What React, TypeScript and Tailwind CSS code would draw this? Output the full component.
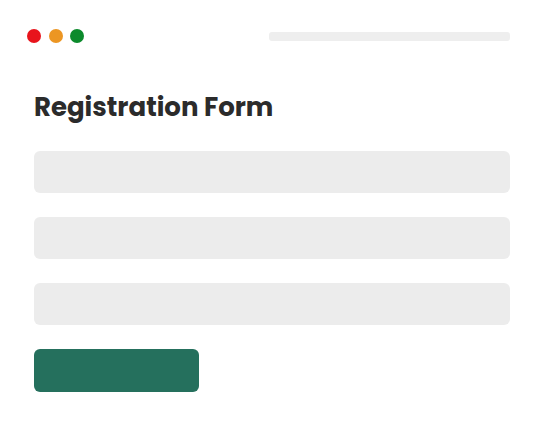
import React from "react";

export default function App() {
  return (
    <div className="w-[539px] h-[448px] bg-white" style={{ fontFamily: "Poppins, Inter, 'Noto Sans', sans-serif" }}>
      <div className="flex items-center justify-between pl-[27px] pr-[29px] pt-[29px]">
        <div className="flex items-center gap-[7.5px]">
          <span className="block w-[14px] h-[14px] rounded-full bg-[#e8141c]" />
          <span className="block w-[14px] h-[14px] rounded-full bg-[#ec9623]" />
          <span className="block w-[14px] h-[14px] rounded-full bg-[#0c8a2c]" />
        </div>
        <div className="w-[241px] h-[9px] rounded-[3px] bg-[#eeeeee]" />
      </div>
      <div className="pl-[34px] pr-[29px]">
        <h1 className="mt-[46px] text-[26px] leading-[36px] font-bold text-[#2b2b2b]">
          Registration Form
        </h1>
        <div className="mt-[26px] flex flex-col gap-[24px]">
          <div className="h-[42px] rounded-[6px] bg-[#ececec]" />
          <div className="h-[42px] rounded-[6px] bg-[#ececec]" />
          <div className="h-[42px] rounded-[6px] bg-[#ececec]" />
          <div className="w-[165px] h-[43px] rounded-[6px] bg-[#25705d]" />
        </div>
      </div>
    </div>
  );
}
